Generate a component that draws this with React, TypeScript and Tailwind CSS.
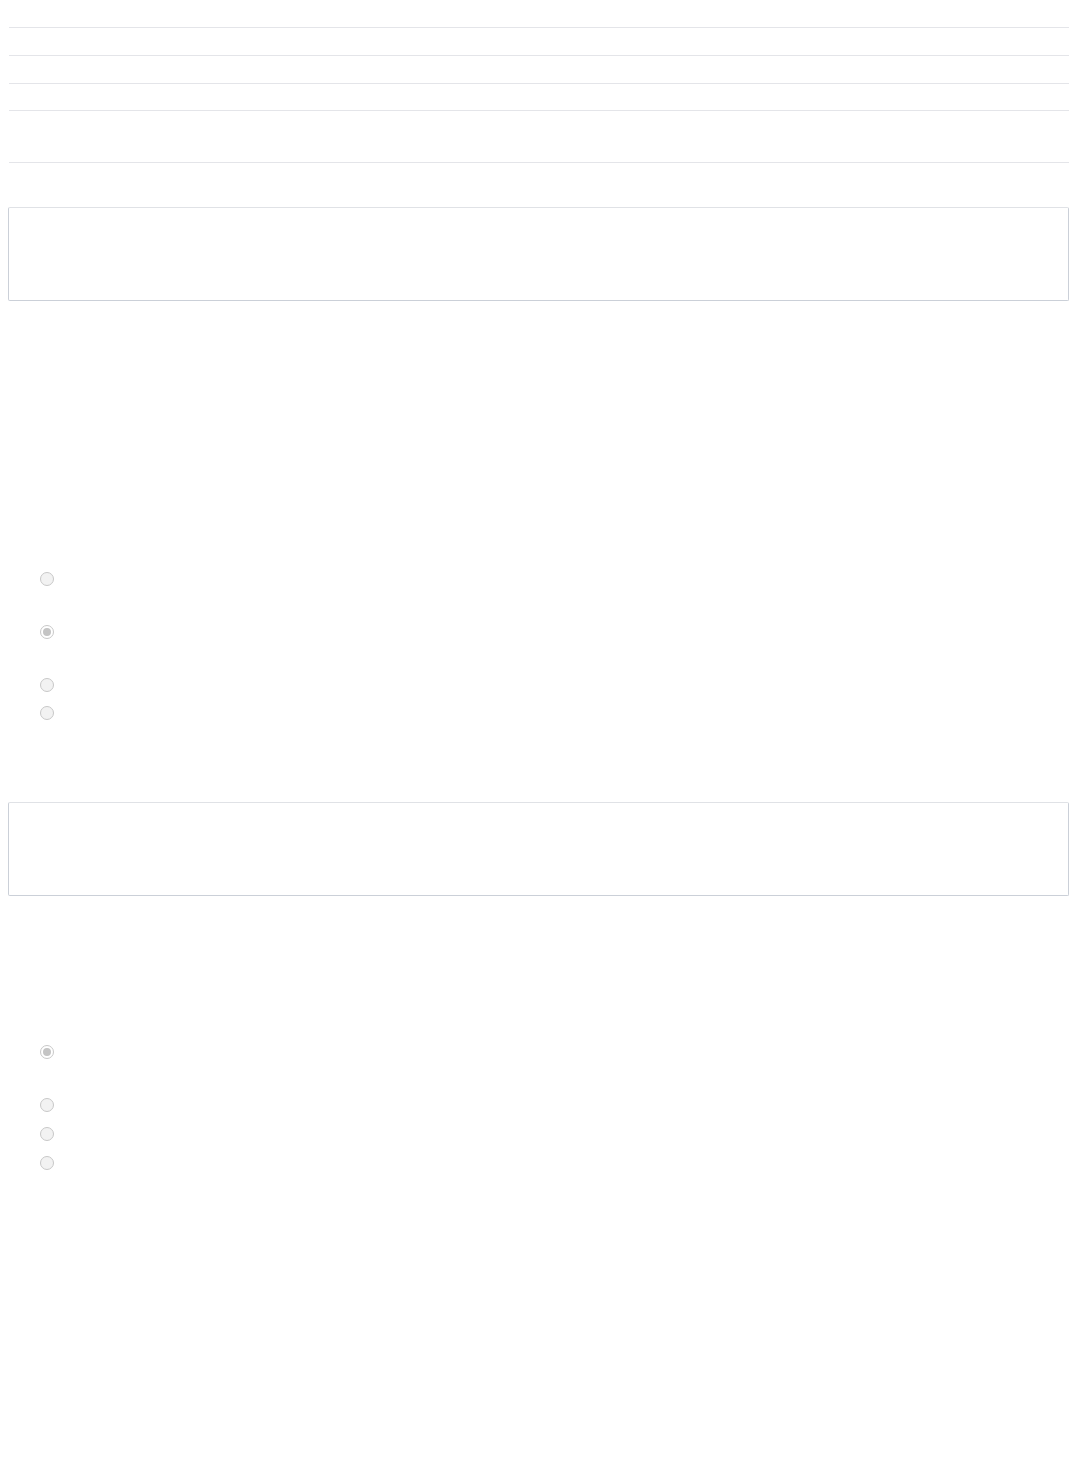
import React from 'react'

// Empty, disabled form: divider rows, two text boxes and two radio groups
const rows = ['h-[28px]', 'h-[28px]', 'h-[28px]', 'h-[27px]', 'h-[52px]']

function Radio({ checked, className }: { checked?: boolean; className: string }) {
  return (
    <div className={`flex items-center pl-[31px] h-[14px] ${className}`}>
      <span
        role="radio"
        aria-checked={checked ? 'true' : 'false'}
        aria-disabled="true"
        className={`flex items-center justify-center w-[14px] h-[14px] rounded-full border border-[#c8c8c8] ${
          checked ? 'bg-white' : 'bg-[#f2f2f2]'
        }`}
      >
        {checked && <span className="w-[8px] h-[8px] rounded-full bg-[#c4c4c4]" />}
      </span>
    </div>
  )
}

function Box({ className }: { className: string }) {
  return (
    <div
      className={`h-[94px] rounded-[2px] border border-[#cbd0d8] border-t-[#e0e2e6] bg-white ${className}`}
    />
  )
}

export default function App() {
  return (
    <div className="w-[1078px] min-h-[1481px] bg-white px-[9px]" style={{ fontFamily: 'Roboto, sans-serif' }}>
      {rows.map((h, i) => (
        <div key={i} className={`${h} border-b border-[#e4e5e9]`} />
      ))}

      <Box className="mt-[44px] -ml-px" />

      <Radio className="mt-[271px]" />
      <Radio checked className="mt-[39px]" />
      <Radio className="mt-[39px]" />
      <Radio className="mt-[14px]" />

      <Box className="mt-[82px] -ml-px" />

      <Radio checked className="mt-[149px]" />
      <Radio className="mt-[39px]" />
      <Radio className="mt-[15px]" />
      <Radio className="mt-[15px]" />
    </div>
  )
}
